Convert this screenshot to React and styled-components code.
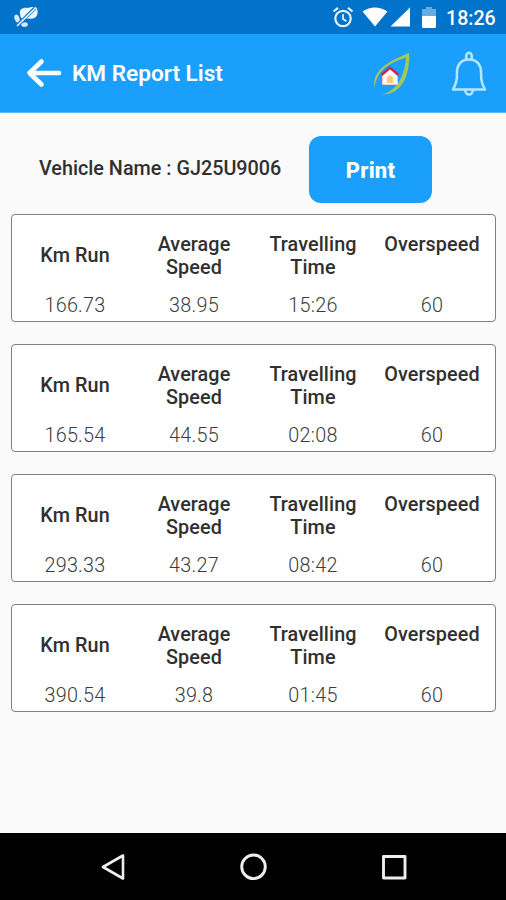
import React from 'react';
import styled, { createGlobalStyle } from 'styled-components';

const GlobalStyle = createGlobalStyle`
    * {
        box-sizing: border-box;
    }

    body {
        margin: 0;
        background: #fafafa;
        font-family: Roboto, "Liberation Sans", sans-serif;
    }

    svg {
        display: block;
        flex-shrink: 0;
    }
`;

const Screen = styled.div`
    display: flex;
    flex-direction: column;
    width: 506px;
    height: 900px;
    overflow: hidden;
    background: #fafafa;
`;

const StatusBar = styled.div`
    display: flex;
    align-items: center;
    height: 34px;
    flex-shrink: 0;
    padding: 0 10px 0 14px;
    background: #0273cb;
    color: #fff;
`;

const StatusIcons = styled.div`
    display: grid;
    grid-template-columns: 22px 26px 20px 14px;
    column-gap: 8px;
    align-items: center;
    margin-left: auto;

    svg:nth-child(3) {
        margin-left: -6px;
    }

    svg:nth-child(4) {
        margin-left: -2px;
    }
`;

const Clock = styled.span`
    width: 50px;
    margin-left: 8px;
    padding-top: 4px;
    font-size: 19.6px;
    line-height: 22px;
    font-weight: 500;
    white-space: nowrap;
`;

const Header = styled.header`
    display: flex;
    align-items: center;
    height: 79px;
    flex-shrink: 0;
    padding: 0 18px 0 26px;
    background: #1b9ffc;
    border-bottom: 1px solid #58b8fb;
    color: #fff;
`;

const Title = styled.h1`
    margin: 2px 0 0 10px;
    font-size: 22.6px;
    line-height: 28px;
    font-weight: 600;
    white-space: nowrap;
`;

const HeaderActions = styled.div`
    display: flex;
    align-items: center;
    gap: 39px;
    margin-left: auto;
`;

const Content = styled.main`
    flex: 1;
    padding: 23px 10px 0 11px;
`;

const VehicleRow = styled.div`
    display: flex;
    align-items: center;
    height: 67px;
    padding-left: 28px;
`;

const VehicleName = styled.div`
    width: 270px;
    margin-top: -1px;
    font-size: 19.8px;
    line-height: 24px;
    font-weight: 500;
    color: #303030;
    white-space: nowrap;
`;

const PrintButton = styled.button`
    width: 123px;
    height: 67px;
    padding: 1px 0 0;
    border: none;
    border-radius: 12px;
    background: #1b9ffc;
    color: #fff;
    font-family: inherit;
    font-size: 22px;
    font-weight: 800;
    letter-spacing: 0.2px;
`;

const ReportList = styled.div`
    display: flex;
    flex-direction: column;
    gap: 22px;
    margin-top: 11px;
`;

const Card = styled.section`
    display: grid;
    grid-template-columns: repeat(4, 119px);
    justify-content: center;
    height: 108px;
    padding-top: 18px;
    border: 1px solid #808080;
    border-radius: 4px;
    background: #fff;
`;

const Column = styled.div`
    display: flex;
    flex-direction: column;
    text-align: center;
`;

const Label = styled.div`
    display: flex;
    justify-content: center;
    align-items: ${props => props.$middle ? 'center' : 'flex-start'};
    height: 45px;
    font-size: 19.8px;
    line-height: 23px;
    font-weight: 500;
    letter-spacing: 0.1px;
    color: #303030;
    white-space: pre-line;
`;

const Value = styled.div`
    margin-top: 16px;
    font-size: 19.8px;
    line-height: 24px;
    font-weight: 300;
    letter-spacing: 0.25px;
    color: #3c3c3c;
`;

const NavBar = styled.nav`
    display: flex;
    justify-content: space-between;
    align-items: center;
    height: 67px;
    flex-shrink: 0;
    padding: 0 98px 0 99px;
    background: #000;
`;

const columns = [
    { key: 'km', label: 'Km Run', middle: true },
    { key: 'speed', label: 'Average\nSpeed' },
    { key: 'time', label: 'Travelling\nTime' },
    { key: 'overspeed', label: 'Overspeed' },
];

const reports = [
    { km: '166.73', speed: '38.95', time: '15:26', overspeed: '60' },
    { km: '165.54', speed: '44.55', time: '02:08', overspeed: '60' },
    { km: '293.33', speed: '43.27', time: '08:42', overspeed: '60' },
    { km: '390.54', speed: '39.8', time: '01:45', overspeed: '60' },
];

const NotifyIcon = () => (
    <svg width="25" height="22" viewBox="0 0 25 22">
        <path d="M6 8C5 3 9 1 14 2c4-2 10-1 9.500 3 1 6-4 8.500-8 7.500l-5 .5c-3 0-4-1-4.500-5z" fill="#eef6fd" />
        <ellipse cx="3" cy="12.500" rx="2.500" ry="4" fill="#d7e9f9" transform="rotate(-18 3 12.500)" />
        <ellipse cx="10.500" cy="18.500" rx="3.300" ry="2.300" fill="#d7e9f9" />
        <path d="M4 19L21 2" stroke="#0273cb" strokeWidth="3.400" />
        <path d="M3 20L22 1.500" stroke="#fff" strokeWidth="1.600" />
    </svg>
);

const AlarmIcon = () => (
    <svg width="22" height="22" viewBox="0 0 22 22" fill="none" stroke="#e4f2fd">
        <circle cx="11" cy="12.500" r="7.700" strokeWidth="2.200" />
        <path d="M11 8v5l3.500 2.300" strokeWidth="1.700" />
        <path d="M1.500 5.500L6 1.800M20.500 5.500L16 1.800" strokeWidth="2.200" />
    </svg>
);

const WifiIcon = () => (
    <svg width="26" height="20" viewBox="0 0 26 20">
        <path d="M.5 4.500Q13-3.500 25.500 4.500L13 19.500z" fill="#fff" />
    </svg>
);

const SignalIcon = () => (
    <svg width="20" height="20" viewBox="0 0 20 20">
        <path d="M.5 19.500L20 .5V19.500z" fill="#fff" />
    </svg>
);

const BatteryIcon = () => (
    <svg width="14" height="21" viewBox="0 0 14 21">
        <path d="M4 0h6v2h4v8H0V2h4z" fill="#67ace0" />
        <path d="M0 9h14v10.500q0 1.500-1.500 1.500h-11Q0 21 0 19.500z" fill="#fff" />
    </svg>
);

const BackIcon = () => (
    <svg width="36" height="30" viewBox="0 0 36 30" fill="none" stroke="#fff" strokeWidth="4.600" strokeLinecap="round" strokeLinejoin="round">
        <path d="M15.500 3.500L3.500 15L15.500 26.500M4 15H33" />
    </svg>
);

const HomeLeafIcon = () => (
    <svg width="38" height="46" viewBox="0 0 38 46">
        <path d="M1.500 38C-1 22 11 13 36 3C37.500 24 29 45 9 44.500C24 41 31.500 26 33 7.500C14 14 4 21 1.500 38z" fill="#a0c95a" />
        <path d="M9.500 25L17 18.500L24.500 25V34.500H9.500z" fill="#fff8fb" />
        <path d="M9.500 25V34.500H24.500V25" fill="none" stroke="#f0c5d6" />
        <path d="M14 33v-5.500l3-2.500 3 2.500v5.500z" fill="#f4c984" />
        <path d="M8.500 25L17 17.800L25.500 25" fill="none" stroke="#c8274d" strokeWidth="2.300" />
    </svg>
);

const BellIcon = () => (
    <svg width="38" height="46" viewBox="0 0 38 46" fill="none" stroke="#b4e7ff" strokeWidth="2.500" strokeLinejoin="round" strokeLinecap="round">
        <path d="M16.200 9.500V6a2.800 3.200 0 0 1 5.600 0V9.500" />
        <path d="M19 9.500C11 9.500 7 15 7 22C7 31 6 34 3 39.500H35C32 34 31 31 31 22C31 15 27 9.500 19 9.500z" />
        <path d="M15.200 40c0 6 7.600 6 7.600 0" />
    </svg>
);

const NavBackIcon = () => (
    <svg width="28" height="28" viewBox="0 0 28 28" fill="none" stroke="#eee" strokeWidth="2.600" strokeLinejoin="round">
        <path d="M4 14L24 2.500V25.500z" />
    </svg>
);

const NavHomeIcon = () => (
    <svg width="28" height="28" viewBox="0 0 28 28" fill="none" stroke="#eee" strokeWidth="2.900">
        <circle cx="13.500" cy="13.800" r="11.800" />
    </svg>
);

const NavRecentIcon = () => (
    <svg width="28" height="28" viewBox="0 0 28 28" fill="none" stroke="#eee" strokeWidth="2.900" strokeLinejoin="round">
        <rect x="3.500" y="3.500" width="21.500" height="21.500" />
    </svg>
);

/**
 * ReportCard Component
 *
 * Shows the distance, average speed, travelling time and overspeed of one report.
 */
const ReportCard = (props) => {
    const { report } = props;

    return (
        <Card>
            {columns.map(c => (
                <Column key={c.key}>
                    <Label $middle={c.middle}>{c.label}</Label>
                    <Value>{report[c.key]}</Value>
                </Column>
            ))}
        </Card>
    );
};

const App = () => {
    return (
        <Screen>
            <GlobalStyle />
            <StatusBar>
                <NotifyIcon />
                <StatusIcons>
                    <AlarmIcon />
                    <WifiIcon />
                    <SignalIcon />
                    <BatteryIcon />
                </StatusIcons>
                <Clock>18:26</Clock>
            </StatusBar>
            <Header>
                <BackIcon />
                <Title>KM Report List</Title>
                <HeaderActions>
                    <HomeLeafIcon />
                    <BellIcon />
                </HeaderActions>
            </Header>
            <Content>
                <VehicleRow>
                    <VehicleName>Vehicle Name : GJ25U9006</VehicleName>
                    <PrintButton>Print</PrintButton>
                </VehicleRow>
                <ReportList>
                    {reports.map(r => <ReportCard key={r.km} report={r} />)}
                </ReportList>
            </Content>
            <NavBar>
                <NavBackIcon />
                <NavHomeIcon />
                <NavRecentIcon />
            </NavBar>
        </Screen>
    );
};

export default App;
